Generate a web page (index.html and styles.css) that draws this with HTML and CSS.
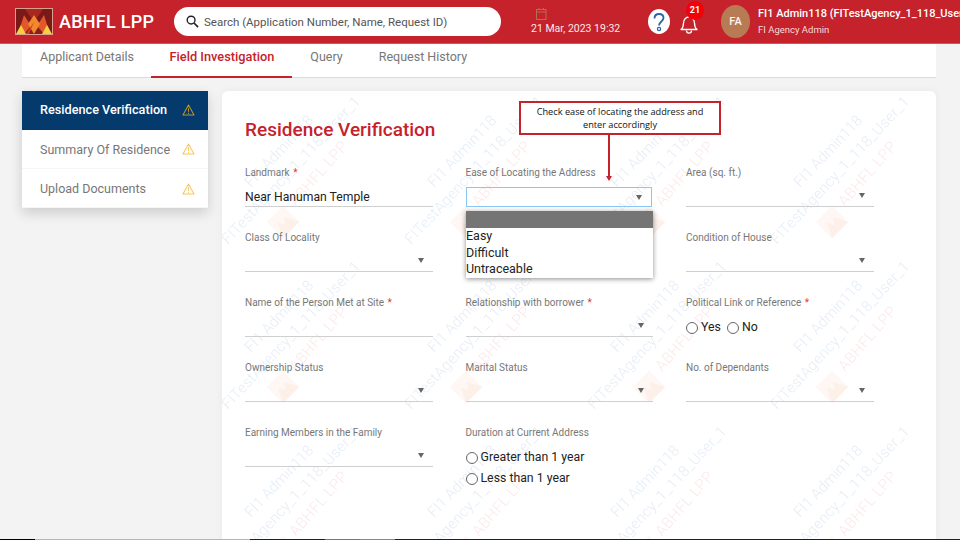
FILE: index.html
```html
<!DOCTYPE html>
<html lang="en">
<head>
<meta charset="utf-8">
<title>ABHFL LPP</title>
<link rel="stylesheet" href="styles.css">
</head>
<body>
<header class="topbar">
  <div class="brand">
    <svg class="logo" viewBox="0 0 38 27" width="38" height="27" aria-hidden="true">
      <rect width="38" height="27" fill="#d9a28e"/>
      <rect x="1" y="1" width="36" height="25" fill="#8c1d1c"/>
      <polygon points="1,1 10,1 19,14 10,26 1,26" fill="#7a1a18"/>
      <polygon points="37,1 28,1 19,14 28,26 37,26" fill="#7a1a18"/>
      <polygon points="10,1 19,14 28,1" fill="#a8271f"/>
      <polygon points="9,7 16,18 9,26 3,26" fill="#e2572b"/>
      <polygon points="29,7 22,18 29,26 35,26" fill="#e2572b"/>
      <polygon points="19,7 25,16 19,26 13,16" fill="#f08a2c"/>
      <polygon points="1,26 6,17 11,26" fill="#f7cf3f"/>
      <polygon points="37,26 32,17 27,26" fill="#f7cf3f"/>
      <polygon points="11,26 19,14 14,26" fill="#d43a24"/>
    </svg>
    <span class="brand-name">ABHFL LPP</span>
  </div>
  <div class="search">
    <svg viewBox="0 0 14 14" width="13" height="13" aria-hidden="true"><circle cx="5.5" cy="5.5" r="4.2" fill="none" stroke="#222" stroke-width="1.5"/><path d="M8.6 8.6L13 13" stroke="#222" stroke-width="1.8"/></svg>
    <span>Search (Application Number, Name, Request ID)</span>
  </div>
  <div class="datebox">
    <svg viewBox="0 0 11 12" width="11" height="12" aria-hidden="true"><rect x=".5" y="1.5" width="9.5" height="10" fill="none" stroke="#b3704f"/><path d="M.5 4h9.5M3 0v2M7.5 0v2" stroke="#b3704f"/></svg>
    <span>21 Mar, 2023 19:32</span>
  </div>
  <svg class="help" viewBox="0 0 22 25" width="22" height="25" aria-hidden="true">
    <ellipse cx="11" cy="12.5" rx="11" ry="12.5" fill="#fff"/>
    <path d="M6.5 9.5C6.5 6.5 8.5 5 11 5s4.5 1.500 4.500 4c0 3.500-4.500 3.500-4.500 7.500" fill="none" stroke="#2a64a5" stroke-width="1.800"/>
    <circle cx="11" cy="20" r="1.600" fill="none" stroke="#2a64a5" stroke-width="1.200"/>
  </svg>
  <div class="bell">
    <svg viewBox="0 0 18 20" width="18" height="20" aria-hidden="true"><path d="M1 15.500c2-1.500 2.500-3 2.500-6.500 0-3.500 2.500-6 5.500-6s5.500 2.500 5.500 6c0 3.500.5 5 2.500 6.500z" fill="none" stroke="#fff" stroke-width="1.300" stroke-linejoin="round"/><path d="M6.500 16.500c0 3.500 5 3.500 5 0" fill="none" stroke="#fff" stroke-width="1.300"/></svg>
    <span class="badge">21</span>
  </div>
  <div class="avatar">FA</div>
  <div class="user">
    <div class="user-name">FI1 Admin118 (FITestAgency_1_118_User_1)</div>
    <div class="user-role">FI Agency Admin</div>
  </div>
</header>

<main class="page">
  <nav class="tabs">
    <a class="tab">Applicant Details</a>
    <a class="tab tab-active">Field Investigation</a>
    <a class="tab">Query</a>
    <a class="tab">Request History</a>
  </nav>

  <div class="content">
    <aside class="side">
      <div class="side-item side-active"><span>Residence Verification</span>
        <svg class="warn" viewBox="0 0 14 13" width="13" height="12" aria-hidden="true"><path d="M7 1L13 12H1z" fill="none" stroke="#b8962b" stroke-width="1.100" stroke-linejoin="round"/><path d="M7 4.500v4M7 9.500v1.200" stroke="#b8962b" stroke-width="1.100"/></svg></div>
      <div class="side-item"><span>Summary Of Residence</span>
        <svg class="warn" viewBox="0 0 14 13" width="13" height="12" aria-hidden="true"><path d="M7 1L13 12H1z" fill="none" stroke="#f7c65c" stroke-width="1.100" stroke-linejoin="round"/><path d="M7 4.500v4M7 9.500v1.200" stroke="#f7c65c" stroke-width="1.100"/></svg></div>
      <div class="side-item side-last"><span>Upload Documents</span>
        <svg class="warn" viewBox="0 0 14 13" width="13" height="12" aria-hidden="true"><path d="M7 1L13 12H1z" fill="none" stroke="#f7c65c" stroke-width="1.100" stroke-linejoin="round"/><path d="M7 4.500v4M7 9.500v1.200" stroke="#f7c65c" stroke-width="1.100"/></svg></div>
    </aside>

    <section class="card">
      <svg class="watermark" width="714" height="449" aria-hidden="true">
        <defs>
          <pattern id="wm" x="0" y="0" width="183" height="165" patternUnits="userSpaceOnUse">
            <text class="wm-blue" transform="translate(29 97) rotate(-46.500)">FI1 Admin118</text>
            <text class="wm-blue wm-wide" transform="translate(6 154) rotate(-47)">FITestAgency_1_118_User_1</text>
            <text class="wm-red" transform="translate(74 116) rotate(-49)">ABHFL LPP</text>
            <g transform="translate(61 131) rotate(-45)">
              <rect x="-11.500" y="-11.500" width="23" height="23" fill="#fef7f3"/>
              <path d="M-11.500 11.500L-4 -3L0 4L4 -3L11.500 11.500z" fill="#fdf0e8"/>
            </g>
          </pattern>
        </defs>
        <rect width="714" height="449" fill="url(#wm)"/>
      </svg>

      <h1 class="card-title">Residence Verification</h1>

      <form class="form">
        <div class="field"><label class="lbl">Landmark <i>*</i></label><div class="ctl ctl-text">Near Hanuman Temple</div></div>
        <div class="field"><label class="lbl">Ease of Locating the Address</label><div class="ctl ctl-focus"><b class="caret"></b></div></div>
        <div class="field"><label class="lbl">Area (sq. ft.)</label><div class="ctl"><b class="caret"></b></div></div>

        <div class="field"><label class="lbl">Class Of Locality</label><div class="ctl"><b class="caret"></b></div></div>
        <div class="field"><div class="lbl lbl-blank"></div><div class="ctl"><b class="caret"></b></div></div>
        <div class="field"><label class="lbl">Condition of House</label><div class="ctl"><b class="caret"></b></div></div>

        <div class="field"><label class="lbl">Name of the Person Met at Site <i>*</i></label><div class="ctl"></div></div>
        <div class="field"><label class="lbl">Relationship with borrower <i>*</i></label><div class="ctl"><b class="caret"></b></div></div>
        <div class="field"><label class="lbl">Political Link or Reference <i>*</i></label>
          <div class="radios-inline"><span class="radio"><b></b>Yes</span><span class="radio"><b></b>No</span></div></div>

        <div class="field"><label class="lbl">Ownership Status</label><div class="ctl"><b class="caret"></b></div></div>
        <div class="field"><label class="lbl">Marital Status</label><div class="ctl"><b class="caret"></b></div></div>
        <div class="field"><label class="lbl">No. of Dependants</label><div class="ctl"><b class="caret"></b></div></div>

        <div class="field"><label class="lbl">Earning Members in the Family</label><div class="ctl"><b class="caret"></b></div></div>
        <div class="field"><label class="lbl">Duration at Current Address</label>
          <div class="radios-stack"><span class="radio"><b></b>Greater than 1 year</span><span class="radio"><b></b>Less than 1 year</span></div></div>
      </form>

      <ul class="dropdown">
        <li class="opt-blank"></li>
        <li>Easy</li>
        <li>Difficult</li>
        <li>Untraceable</li>
      </ul>

      <div class="callout">Check ease of locating the address and<br>enter accordingly</div>
      <div class="arrow"></div>
    </section>
  </div>
</main>

<div class="taskstrip"><i class="s1"></i><i class="s2"></i><i class="s3"></i><i class="s4"></i><i class="s5"></i><i class="s6"></i></div>
</body>
</html>
```
FILE: styles.css
```css
* { box-sizing: border-box; }
html, body { margin: 0; padding: 0; }
body {
  width: 960px; height: 540px; overflow: hidden; position: relative;
  background: #f3f3f3; color: #222;
  font-family: Roboto, "Noto Sans", sans-serif;
}

.topbar {
  height: 44px; background: #c5222b; border-bottom: 1px solid #d8535a;
  display: flex; align-items: center; color: #fff; white-space: nowrap; overflow: hidden;
}
.brand { display: flex; align-items: center; margin-left: 15px; width: 159px; flex: none; }
.logo { flex: none; }
.brand-name { margin-left: 6px; font-size: 18px; font-weight: 500; letter-spacing: .25px; }
.search {
  width: 327px; height: 29px; background: #fff; border-radius: 15px; flex: none;
  display: flex; align-items: center; padding-left: 12px; color: #555; font-size: 11.500px;
}
.search span { margin-left: 5px; }
.datebox {
  margin-left: 30px; width: 88px; flex: none; display: flex; flex-direction: column; align-items: flex-start;
  font-size: 10.500px; line-height: 13px; color: #fbeaea; gap: 2px;
}
.datebox svg { margin-left: 5px; }
.help { margin-left: 29px; flex: none; }
.bell { position: relative; margin-left: 10px; width: 18px; height: 20px; margin-top: 4px; flex: none; }
.badge {
  position: absolute; left: 6px; top: -13px; width: 18px; height: 19px; border-radius: 50%;
  background: #f40009; color: #fff; font-size: 9px; font-weight: 700; text-align: center; line-height: 18px;
}
.avatar {
  margin-left: 23px; width: 29px; height: 33px; border-radius: 50%; background: #b87c55; flex: none;
  font-size: 11px; font-weight: 500; color: #fdf5ee; text-align: center; line-height: 33px;
}
.user { margin-left: 8px; flex: none; }
.user-name { font-size: 11px; font-weight: 500; line-height: 15px; }
.user-role { font-size: 9.500px; line-height: 14px; margin-top: 2px; color: #f7dcdc; }

.page { padding: 0 24px 0 22px; }
.tabs {
  height: 34px; background: #fff; border-bottom: 1px solid #dcdcdc;
  display: flex; font-size: 12.500px; color: #777; padding-left: 18px;
}
.tab { line-height: 26px; margin-right: 36px; }
.tab:first-child { margin-right: 17.500px; }
.tab-active {
  color: #c5222b; font-weight: 500; font-size: 12.800px; margin: 0 18px 0 0;
  padding: 0 18px; border-bottom: 2px solid #c5222b; height: 34px;
}

.content { display: flex; align-items: flex-start; gap: 14px; margin-top: 13px; }
.side { width: 186px; flex: none; background: #fff; box-shadow: 0 5px 12px rgba(0,0,0,.16); }
.side-item {
  height: 39px; display: flex; align-items: center; justify-content: space-between;
  padding: 0 13px 0 18px; font-size: 12.500px; color: #777; border-bottom: 1px solid #f6f6f6;
}
.side-active { background: #053a6c; color: #fff; font-weight: 500; font-size: 12.700px; border-bottom: 0; padding-bottom: 2px; }
.side-last { padding-top: 1px; }
.warn { flex: none; }

.card {
  position: relative; width: 714px; height: 449px; background: #fff; border-radius: 6px 6px 0 0;
  padding: 27px 23px 0; box-shadow: 0 0 8px rgba(0,0,0,.05); overflow: hidden;
}
.watermark { position: absolute; left: 0; top: 0; }
.wm-blue { font: 300 15px Roboto, sans-serif; fill: #e6edf6; }
.wm-wide { letter-spacing: .35px; }
.wm-red { font: 300 15px Roboto, sans-serif; letter-spacing: .5px; fill: #fce9ea; }
.card-title {
  position: relative; margin: 0; font-size: 19px; font-weight: 500; color: #c5222b; line-height: 24px;
}
.form {
  position: relative; margin-top: 24px;
  display: grid; grid-template-columns: repeat(3, 187.500px); column-gap: 33px; grid-auto-rows: 65px;
}
.field { display: flex; flex-direction: column; }
.lbl { font-size: 10px; color: #777; line-height: 14px; }
.lbl-blank { height: 14px; }
.lbl i { color: #e53935; font-style: normal; margin-left: 1px; }
.ctl {
  position: relative; height: 21px; margin-top: 6px; border-bottom: 1px solid #cfcfcf;
  font-size: 12.200px; line-height: 22px; color: #222;
}
.ctl-text { padding-left: 0; }
.ctl-focus { border: 1px solid #8cc6f5; height: 20px; margin-top: 7px; width: 186.500px; }
.caret {
  position: absolute; right: 9px; top: 7px; width: 0; height: 0;
  border-left: 3.500px solid transparent; border-right: 3.500px solid transparent; border-top: 5px solid #666;
}
.radios-inline { display: flex; gap: 6px; margin-top: 9px; }
.radios-stack { display: flex; flex-direction: column; margin-top: 9px; gap: 4px; }
.radio { display: flex; align-items: center; font-size: 12.300px; line-height: 17px; color: #222; }
.radio b { width: 12px; height: 12px; border: 1px solid #666; border-radius: 50%; margin-right: 3px; background: #fff; flex: none; }

.dropdown {
  position: absolute; left: 244px; top: 120px; width: 187px; height: 67px; margin: 0; padding: 0;
  list-style: none; background: #fff; box-shadow: 0 1px 5px rgba(0,0,0,.45);
  font-size: 12.500px; line-height: 16px; color: #222;
}
.dropdown li { height: 16.500px; }
.dropdown .opt-blank { background: #757575; height: 17px; }
.callout {
  position: absolute; left: 297px; top: 10px; width: 202px; height: 34px; background: #fff;
  border: 2px solid #c5222b; color: #111; font: 9.200px/13px "Open Sans", sans-serif; text-align: center; padding-top: 2px;
}
.arrow {
  position: absolute; left: 386px; top: 44px; width: 2px; height: 41px; background: #c5222b;
}
.arrow::after {
  content: ""; position: absolute; left: -2px; bottom: -5px; width: 0; height: 0;
  border-left: 3px solid transparent; border-right: 3px solid transparent; border-top: 5px solid #c5222b;
}

.taskstrip { position: absolute; left: 0; right: 0; bottom: 0; height: 1px; display: flex; background: #2a1c1e; }
.taskstrip i { display: block; height: 1px; }
.s1 { width: 35px; background: #000; }
.s2 { width: 215px; background: #b5b5b5; }
.s3 { width: 75px; background: #2a1c1e; }
.s4 { width: 35px; background: #777; }
.s5 { width: 35px; background: #c07a3c; }
.s6 { flex: 1; background: #2a1c1e; }
```
